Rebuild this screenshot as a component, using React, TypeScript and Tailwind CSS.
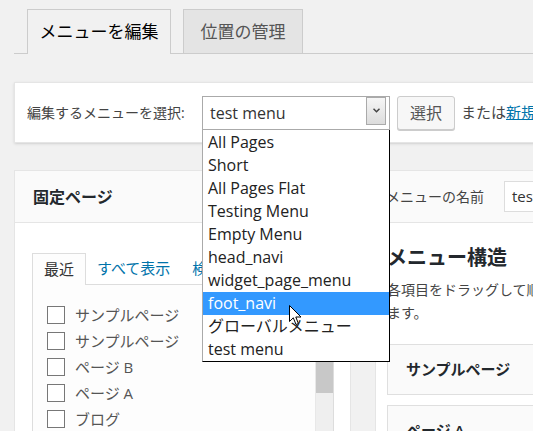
import React from 'react';

const menus = [
    'All Pages',
    'Short',
    'All Pages Flat',
    'Testing Menu',
    'Empty Menu',
    'head_navi',
    'widget_page_menu',
    'foot_navi',
    'グローバルメニュー',
    'test menu',
];

const pages = ['サンプルページ', 'サンプルページ', 'ページ B', 'ページ A', 'ブログ'];

const Cursor: React.FC = () => (
    <svg className="absolute left-[289px] top-[305px] z-30" width="13" height="21" viewBox="0 0 13 21">
        <path
            d="M0.5 0.5 L0.5 16.5 L4.3 12.8 L7 19.5 L9.4 18.5 L6.8 12 L12 12 Z"
            fill="#fff"
            stroke="#000"
            strokeWidth="1"
            strokeLinejoin="miter"
        />
    </svg>
);

const App: React.FC = () => {
    return (
        <div className="relative w-[533px] h-[431px] overflow-hidden bg-[#f1f1f1] font-['Open_Sans','Noto_Sans_CJK_JP',sans-serif] text-[#444]">
            {/* Tabs */}
            <div className="ml-[14px] pt-[9px] pl-[13px] flex gap-[12px] border-b border-[#ccc] h-[54px]">
                <div className="w-[144px] h-[45px] -mb-px border border-b-0 border-[#ccc] bg-[#f1f1f1] flex items-center justify-center text-[17px] text-[#000]">
                    メニューを編集
                </div>
                <div className="w-[120px] h-[44px] border border-b-0 border-[#ccc] bg-[#e4e4e4] flex items-center justify-center text-[17px] text-[#555]">
                    位置の管理
                </div>
            </div>

            {/* Select menu bar */}
            <div className="ml-[14px] mt-[28px] w-[560px] h-[61px] bg-white border border-[#e5e5e5] shadow-sm flex items-center pl-[12px]">
                <span className="w-[175px] shrink-0 whitespace-nowrap text-[14px] leading-[20px] text-[#444]">編集するメニューを選択:</span>
                <div className="relative z-20 shrink-0">
                    <div className="w-[188px] h-[34px] border border-[#aaa] bg-white flex items-center pl-[7px] text-[16px] text-[#333]">
                        test menu
                        <div className="absolute right-[4px] top-[1px] w-[20px] h-[28px] border border-[#aaa] bg-gradient-to-b from-[#f6f6f6] to-[#dcdcdc] flex items-center justify-center">
                            <svg width="7" height="5" viewBox="0 0 7 5">
                                <path d="M0.5 0.8 L3.5 3.8 L6.5 0.8" fill="none" stroke="#444" strokeWidth="1.5" />
                            </svg>
                        </div>
                    </div>
                    {/* Open dropdown list */}
                    <div className="absolute left-0 top-full w-[188px] pt-[1px] bg-white border-l border-l-[#aaa] border-r border-b border-r-black border-b-black">
                        {menus.map((m, i) => (
                            <div
                                key={i}
                                className={
                                    i === 7
                                        ? 'h-[23px] flex items-center pl-[5px] text-[16px] bg-[#3399ff] text-white'
                                        : 'h-[23px] flex items-center pl-[5px] text-[16px] text-[#222]'
                                }
                            >
                                {m}
                            </div>
                        ))}
                    </div>
                </div>
                <button className="ml-[7px] shrink-0 w-[58px] h-[34px] border border-[#ccc] rounded-[3px] bg-[#f7f7f7] text-[16px] text-[#555] shadow-[0_1px_0_#ccc]">
                    選択
                </button>
                <span className="ml-[6px] shrink-0 text-[15px] text-[#444] whitespace-nowrap">
                    または<a className="text-[#0073aa] underline">新規メニュー</a>
                </span>
            </div>

            {/* Columns */}
            <div className="mt-[27px] ml-[14px] flex gap-[24px] items-start">
                {/* Pages panel */}
                <div className="w-[337px] h-[300px] bg-white border border-[#e5e5e5] shrink-0">
                    <div className="h-[52px] bg-[#fafafa] border-b border-[#e5e5e5] flex items-center pl-[18px] text-[16px] font-semibold text-[#23282d]">
                        固定ページ
                    </div>
                    <div className="pt-[29px] pl-[17px] pr-[16px]">
                        <div className="flex items-end h-[32px]">
                            <div className="w-[54px] h-[32px] border border-b-0 border-[#ddd] bg-[#fdfdfd] flex items-center justify-center text-[15px] text-[#333] -mb-px relative">
                                最近
                            </div>
                            <span className="ml-[11px] h-[32px] flex items-center text-[15px] text-[#0073aa]">すべて表示</span>
                            <span className="ml-[22px] h-[32px] flex items-center text-[15px] text-[#0073aa]">検索</span>
                        </div>
                        <div className="h-[200px] border border-[#ddd] bg-[#fdfdfd] flex">
                            <div className="flex-1 pt-[21px] pl-[14px] flex flex-col">
                                {pages.map((p, i) => (
                                    <label key={i} className="h-[26px] flex items-start gap-[10px]">
                                        <span className="w-[18px] h-[18px] border border-[#777] bg-white shrink-0"></span>
                                        <span className="text-[15px] leading-[18px] text-[#555]">{p}</span>
                                    </label>
                                ))}
                            </div>
                            <div className="w-[18px] flex flex-col border-l border-[#e8e8e8]">
                                <div className="h-[108px] bg-[#c8c8c8]"></div>
                                <div className="flex-1 bg-[#efefef]"></div>
                            </div>
                        </div>
                    </div>
                </div>

                {/* Menu structure panel */}
                <div className="w-[400px] h-[300px] bg-white border border-[#e5e5e5] shrink-0">
                    <div className="h-[52px] bg-[#fafafa] border-b border-[#e5e5e5] flex items-center pl-[10px]">
                        <span className="w-[118px] shrink-0 whitespace-nowrap text-[14px] text-[#444]">メニューの名前</span>
                        <div className="w-[200px] shrink-0 h-[31px] bg-white border border-[#ddd] flex items-center pl-[7px] text-[15px] text-[#333] whitespace-nowrap">
                            test menu
                        </div>
                    </div>
                    <div className="pl-[11px]">
                        <h3 className="mt-[22px] text-[20px] leading-[26px] font-semibold text-[#23282d] whitespace-nowrap">
                            メニュー構造
                        </h3>
                        <p className="mt-[7px] text-[14px] leading-[23px] text-[#444] whitespace-nowrap">
                            各項目をドラッグして順番を変更できます。項目の右側の矢印をクリックすると設定オプションが表示され
                            <br />
                            ます。
                        </p>
                        <div className="mt-[20px] h-[51px] bg-[#fafafa] border border-[#dfdfdf] flex items-center pl-[18px] text-[15px] font-semibold text-[#23282d] whitespace-nowrap">
                            サンプルページ
                        </div>
                        <div className="mt-[10px] h-[51px] bg-[#fafafa] border border-[#dfdfdf] flex items-center pl-[18px] text-[15px] font-semibold text-[#23282d] whitespace-nowrap">
                            ページ A
                        </div>
                    </div>
                </div>
            </div>

            <Cursor />
        </div>
    );
};

export default App;
